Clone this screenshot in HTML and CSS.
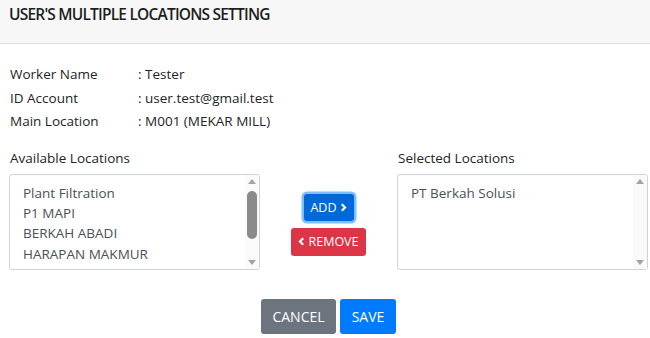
FILE: index.html
```html
<!DOCTYPE html>
<html lang="en">
<head>
    <meta charset="UTF-8">
    <meta name="viewport" content="width=device-width, initial-scale=1.0">
    <title>User's Multiple Locations Setting</title>
    <link rel="stylesheet" href="styles.css">
</head>
<body>
    <div class="modal-header">
        <h4 class="modal-title">USER'S MULTIPLE LOCATIONS SETTING</h4>
    </div>
    <div class="modal-body">
        <div class="info">
            <div class="info-label">Worker Name</div>
            <div class="info-value">: Tester</div>
            <div class="info-label">ID Account</div>
            <div class="info-value">: user.test@gmail.test</div>
            <div class="info-label">Main Location</div>
            <div class="info-value">: M001 (MEKAR MILL)</div>
        </div>

        <div class="picker">
            <div class="column">
                <div class="list-label">Available Locations</div>
                <div class="list-box">
                    <div class="list-items">
                        <div class="list-item">Plant Filtration</div>
                        <div class="list-item">P1 MAPI</div>
                        <div class="list-item">BERKAH ABADI</div>
                        <div class="list-item">HARAPAN MAKMUR</div>
                    </div>
                    <div class="scrollbar">
                        <span class="arrow-up"></span>
                        <div class="track"><div class="thumb"></div></div>
                        <span class="arrow-down"></span>
                    </div>
                </div>
            </div>
            <div class="move-buttons">
                <button class="btn btn-add">ADD
                    <svg class="chev" viewBox="0 0 8 10"><path d="M2 1.2 L5.8 5 L2 8.8" /></svg>
                </button>
                <button class="btn btn-remove">
                    <svg class="chev" viewBox="0 0 8 10"><path d="M6 1.2 L2.2 5 L6 8.8" /></svg>
                    REMOVE</button>
            </div>
            <div class="column">
                <div class="list-label">Selected Locations</div>
                <div class="list-box">
                    <div class="list-items">
                        <div class="list-item">PT Berkah Solusi</div>
                    </div>
                    <div class="scrollbar">
                        <span class="arrow-up"></span>
                        <div class="track"></div>
                        <span class="arrow-down"></span>
                    </div>
                </div>
            </div>
        </div>

        <div class="footer">
            <button class="btn btn-cancel">CANCEL</button>
            <button class="btn btn-save">SAVE</button>
        </div>
    </div>
</body>
</html>
```

FILE: styles.css
```css
body {
    margin: 0;
    font-family: "Open Sans", "Noto Sans", sans-serif;
    font-size: 13.5px;
    color: #212529;
    background-color: #fff;
}
.modal-header {
    height: 43px;
    background-color: #f7f7f7;
    border-bottom: 1px solid #dddddd;
    padding: 0 9px;
}
.modal-title {
    margin: 0;
    padding-top: 2px;
    font-size: 15.5px;
    font-weight: 600;
    line-height: 24px;
    letter-spacing: -0.8px;
    color: #1b1e21;
}
.modal-body {
    padding: 0 2px 0 9px;
}
.info {
    display: grid;
    grid-template-columns: 128px auto;
    padding: 19px 0 0 1px;
    line-height: 23.5px;
}
.picker {
    display: grid;
    grid-template-columns: 251px 1fr 251px;
    margin-top: 13px;
}
.list-label {
    padding-left: 1px;
    line-height: 22px;
    margin-bottom: 5px;
}
.list-box {
    display: flex;
    height: 96px;
    box-sizing: border-box;
    border: 1px solid #ced4da;
    border-radius: 3px;
    overflow: hidden;
}
.list-items {
    flex: 1;
    padding: 8px 13px;
    color: #495057;
}
.list-item {
    line-height: 20.4px;
}
.scrollbar {
    width: 14px;
    display: flex;
    flex-direction: column;
    align-items: center;
    background-color: #fafafa;
}
.track {
    flex: 1;
    width: 100%;
    padding: 0 2px;
    box-sizing: border-box;
}
.thumb {
    height: 48px;
    margin-top: 3px;
    background-color: #8b8b8b;
    border-radius: 5px;
}
.arrow-up, .arrow-down {
    width: 0;
    height: 0;
    border-left: 4px solid transparent;
    border-right: 4px solid transparent;
    margin: 4px 0;
}
.arrow-up {
    border-bottom: 5px solid #a3a3a3;
}
.arrow-down {
    border-top: 5px solid #a3a3a3;
}
.move-buttons {
    display: flex;
    flex-direction: column;
    align-items: center;
    padding-top: 44px;
    gap: 7px;
}
.btn {
    font-family: inherit;
    border: none;
    border-radius: 3px;
    color: #fff;
    cursor: pointer;
    display: inline-flex;
    align-items: center;
    justify-content: center;
    padding: 0;
}
.chev {
    width: 7px;
    height: 9px;
    fill: none;
    stroke: #fff;
    stroke-width: 2.4;
}
.btn-add {
    width: 50px;
    height: 27px;
    font-size: 12.5px;
    gap: 3px;
    margin-top: 3px;
    background-color: #0069d9;
    box-shadow: 0 0 0 2.5px #80bdff;
}
.btn-remove {
    width: 75px;
    height: 28px;
    font-size: 12.5px;
    gap: 3px;
    background-color: #dc3545;
}
.footer {
    display: flex;
    justify-content: center;
    gap: 4px;
    margin-top: 29px;
}
.btn-cancel, .btn-save {
    height: 35px;
    font-size: 14px;
}
.btn-cancel {
    width: 75px;
    background-color: #6c757d;
}
.btn-save {
    width: 56px;
    background-color: #007bff;
}
```
